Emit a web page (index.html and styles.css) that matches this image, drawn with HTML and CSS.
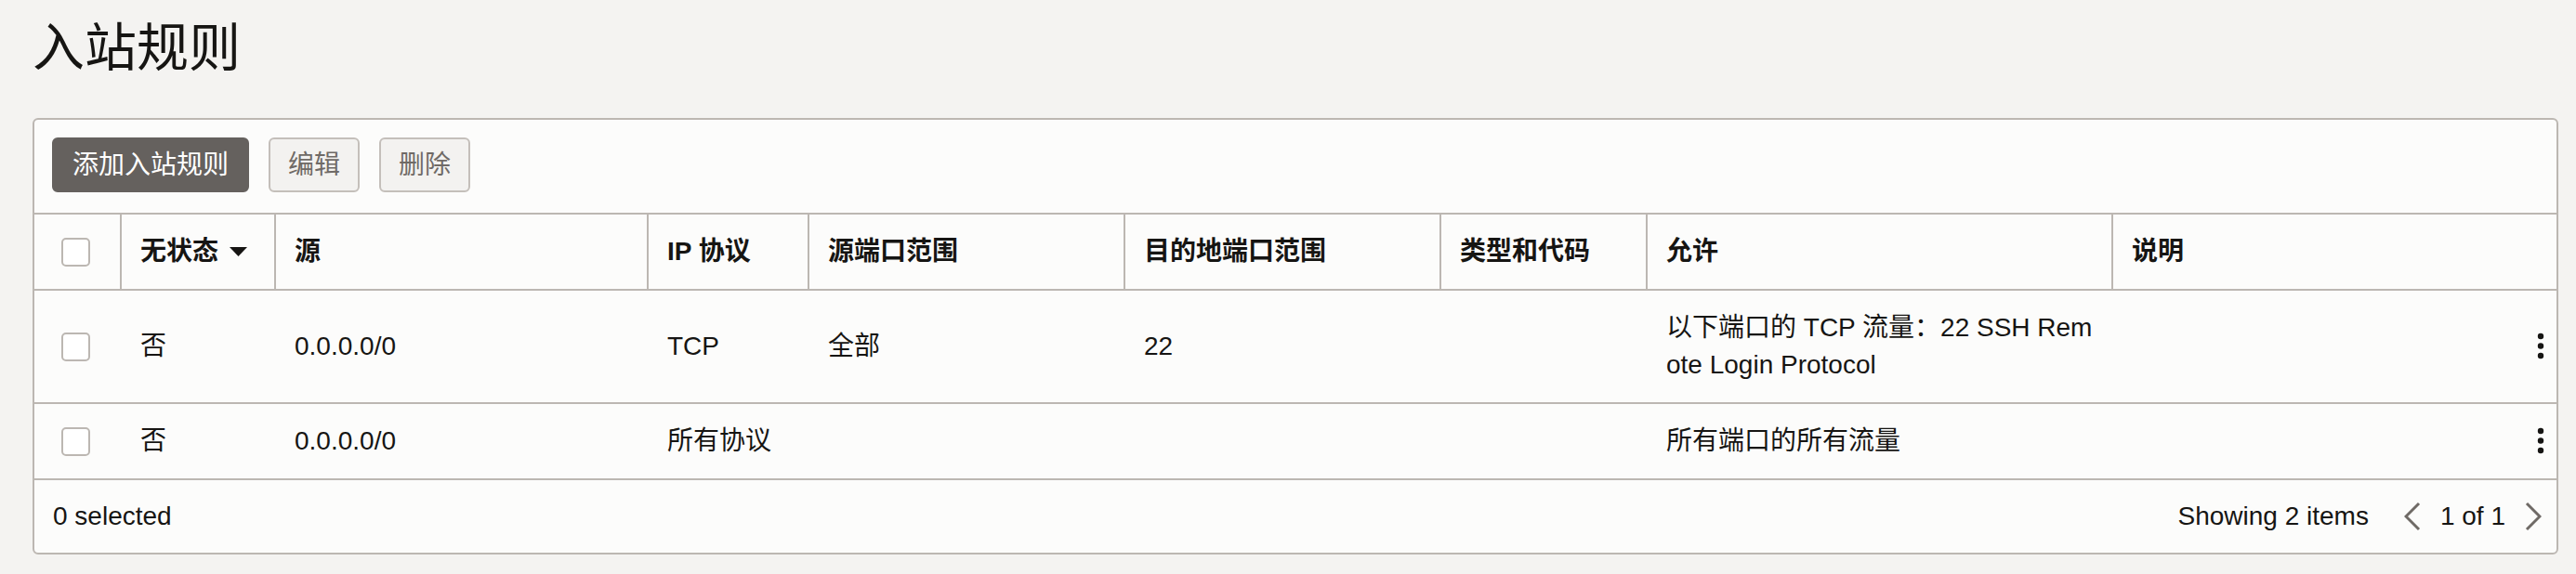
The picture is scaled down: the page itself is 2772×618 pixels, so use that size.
FILE: index.html
```html
<!DOCTYPE html>
<html lang="zh-CN">
<head>
<meta charset="utf-8">
<title>入站规则</title>
<link rel="stylesheet" href="styles.css">
</head>
<body>
<div class="page">
  <h1 class="title">入站规则</h1>
  <div class="card">
    <div class="toolbar">
      <button class="btn btn-primary">添加入站规则</button>
      <button class="btn btn-disabled">编辑</button>
      <button class="btn btn-disabled">删除</button>
    </div>
    <div class="table">
      <div class="tr thead">
        <div class="cell cell-check"><span class="checkbox"></span></div>
        <div class="cell th"><span>无状态</span><svg class="sort" width="19" height="10" viewBox="0 0 19 10"><polygon points="0,0 19,0 9.5,10"/></svg></div>
        <div class="cell th"><span>源</span></div>
        <div class="cell th"><span>IP 协议</span></div>
        <div class="cell th"><span>源端口范围</span></div>
        <div class="cell th"><span>目的地端口范围</span></div>
        <div class="cell th"><span>类型和代码</span></div>
        <div class="cell th"><span>允许</span></div>
        <div class="cell th"><span>说明</span></div>
      </div>
      <div class="tr">
        <div class="cell cell-check"><span class="checkbox"></span></div>
        <div class="cell"><span>否</span></div>
        <div class="cell"><span>0.0.0.0/0</span></div>
        <div class="cell"><span>TCP</span></div>
        <div class="cell"><span>全部</span></div>
        <div class="cell"><span>22</span></div>
        <div class="cell"><span></span></div>
        <div class="cell cell-allow"><span>以下端口的 TCP 流量：22 SSH Remote Login Protocol</span></div>
        <div class="cell cell-actions"><svg class="kebab" width="8" height="30" viewBox="0 0 8 30"><circle cx="4" cy="4" r="3.2"/><circle cx="4" cy="14.5" r="3.2"/><circle cx="4" cy="25" r="3.2"/></svg></div>
      </div>
      <div class="tr">
        <div class="cell cell-check"><span class="checkbox"></span></div>
        <div class="cell"><span>否</span></div>
        <div class="cell"><span>0.0.0.0/0</span></div>
        <div class="cell"><span>所有协议</span></div>
        <div class="cell"><span></span></div>
        <div class="cell"><span></span></div>
        <div class="cell"><span></span></div>
        <div class="cell cell-allow"><span>所有端口的所有流量</span></div>
        <div class="cell cell-actions"><svg class="kebab" width="8" height="30" viewBox="0 0 8 30"><circle cx="4" cy="4" r="3.2"/><circle cx="4" cy="14.5" r="3.2"/><circle cx="4" cy="25" r="3.2"/></svg></div>
      </div>
    </div>
    <div class="footer">
      <span class="selected">0 selected</span>
      <div class="pager">
        <span class="showing">Showing 2 items</span>
        <svg class="chev chev-prev" width="18" height="32" viewBox="0 0 18 32"><polyline points="16,2 2,16 16,30"/></svg>
        <span class="pages">1 of 1</span>
        <svg class="chev chev-next" width="18" height="32" viewBox="0 0 18 32"><polyline points="2,2 16,16 2,30"/></svg>
      </div>
    </div>
  </div>
</div>
</body>
</html>
```

FILE: styles.css
```css
html, body {
  margin: 0;
  padding: 0;
}

body {
  background: #f4f3f1;
  color: #161513;
  font-family: "Liberation Sans", "Noto Sans CJK SC", sans-serif;
}

.page {
  padding: 0 19px 0 35px;
}

.title {
  margin: 18px 0 42px;
  font-size: 56px;
  line-height: 67px;
  font-weight: 400;
  color: #161513;
}

.card {
  width: 2718px;
  box-sizing: border-box;
  background: #fcfcfb;
  border: 2px solid #bcb7b2;
  border-radius: 6px;
  overflow: hidden;
}

.toolbar {
  display: flex;
  gap: 21px;
  padding: 19px 19px 22px;
  border-bottom: 2px solid #bcb7b2;
}

.btn {
  height: 59px;
  box-sizing: border-box;
  border: 2px solid #c4bfba;
  border-radius: 6px;
  padding: 0 19px;
  font-family: "Liberation Sans", "Noto Sans CJK SC", sans-serif;
  font-size: 28px;
  line-height: 40px;
  background: #f3f2f0;
  color: #6f6a66;
}

.btn-primary {
  padding: 0 20px;
  background: #65615e;
  border-color: #65615e;
  color: #ffffff;
}

.tr {
  display: grid;
  grid-template-columns: 92px 166px 401px 173px 340px 340px 222px 501px 479px;
  border-bottom: 2px solid #bcb7b2;
}

.cell {
  display: flex;
  align-items: center;
  min-width: 0;
  padding: 20px 20px;
  border-left: 2px solid transparent;
  font-size: 28px;
  line-height: 40px;
}

.cell-check {
  padding-left: 29px;
  border-left: none;
}

.thead .cell {
  border-left-color: #bcb7b2;
  font-weight: 700;
}

.thead .cell-check {
  border-left: none;
}

.checkbox {
  display: block;
  width: 31px;
  height: 31px;
  box-sizing: border-box;
  border: 2px solid #bcb7b2;
  border-radius: 5px;
  background: #ffffff;
}

.sort {
  margin-left: 12px;
  fill: #161513;
}

.cell-allow {
  padding-right: 12px;
}

.cell-allow span {
  word-break: break-all;
}

.cell-actions {
  justify-content: flex-end;
  padding-right: 13px;
}

.kebab {
  fill: #161513;
}

.footer {
  display: flex;
  align-items: center;
  justify-content: space-between;
  height: 78px;
  padding: 0 16px 0 20px;
  font-size: 28px;
  line-height: 40px;
}

.pager {
  display: flex;
  align-items: center;
}

.showing {
  margin-right: 38px;
}

.pages {
  margin: 0 21px;
}

.chev {
  fill: none;
  stroke: #6f6a66;
  stroke-width: 3;
}
```
